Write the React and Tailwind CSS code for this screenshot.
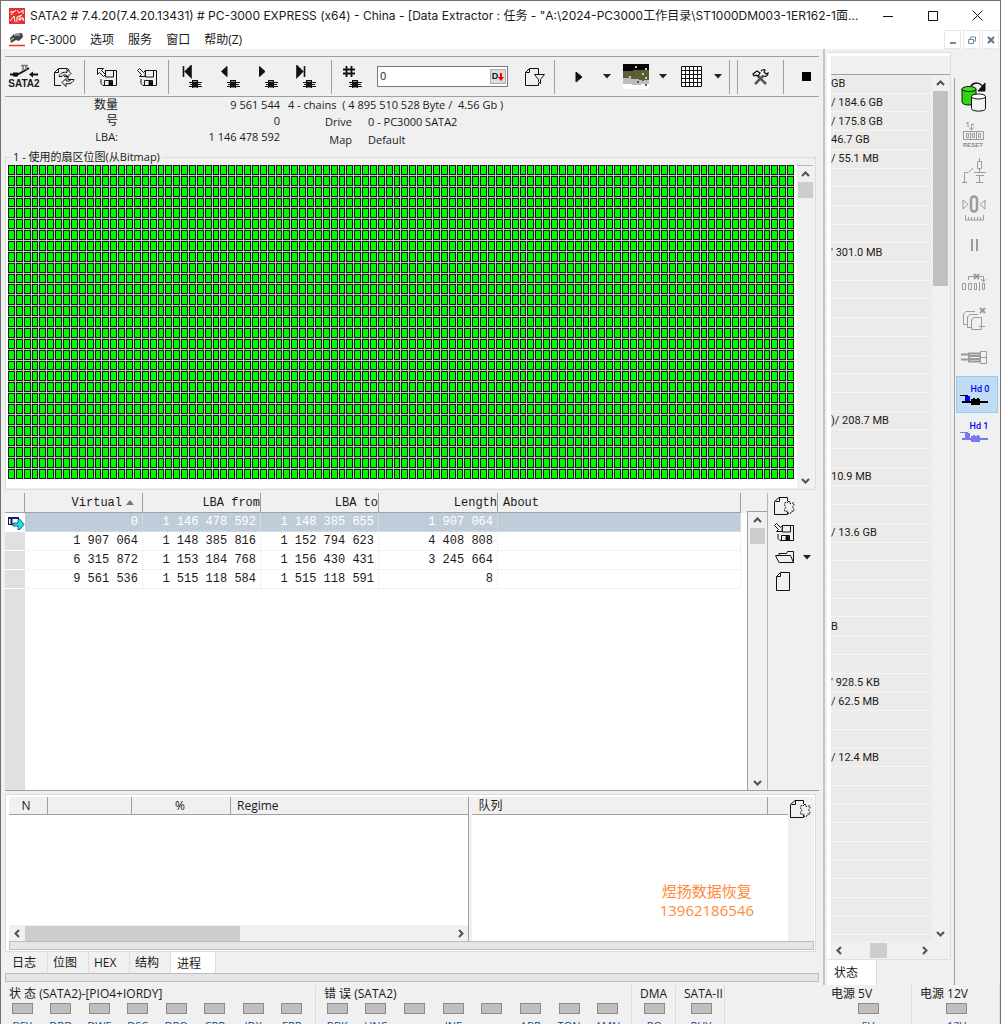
import React from "react";

const UI = "font-['Open_Sans','Noto_Sans_CJK_SC',sans-serif]";

function Svg({ w, h, children, className = "" }) {
  return (
    <svg width={w} height={h} viewBox={`0 0 ${w} ${h}`} fill="none" stroke="#111" className={`shrink-0 ${className}`} aria-hidden="true">
      {children}
    </svg>
  );
}

/* ---------- toolbar drawings ---------- */

function SataIcon() {
  return (
    <Svg w={28} h={14}>
      <path d="M0 10.500h6M22 10.500h6M5 12l9-5 5-3" strokeWidth="2" />
      <path d="M3 8.500h5v4H3zM19 10.500l4-3v6z" fill="#111" stroke="none" />
      <path d="M11 1.500h7M13 2v5M16 2v4" stroke="#777" strokeWidth="1.500" />
    </Svg>
  );
}

function RefreshDocIcon() {
  return (
    <Svg w={22} h={20}>
      <path d="M8 18.500H1.500v-13l4-4h9l2 2M5.500 1.500v4h-4" />
      <path d="M14 5.500c-4-1-7 1-8 4h3c1-2 3-2 5-1v2l4-4-4-4z" fill="#f0f0f0" />
      <path d="M13 16.500c4 1 7-1 8-4h-3c-1 2-3 2-5 1v-2l-4 4 4 4z" fill="#f0f0f0" />
      <path d="M11 9.500h4v3h4" />
    </Svg>
  );
}

function DiskIcon({ dir = "up" }) {
  return (
    <Svg w={22} h={20}>
      <path d="M9 3.500h11.500v15H7l-2-2V12" />
      <path d="M9.500 4v6h8V4M8.500 18.500v-5h8v5" />
      <path d="M13 14.500h2.500v4H13z" fill="#111" />
      {dir === "up" ? (
        <path d="M1.500 1.500h6l-2 2 4 4-2 2-4-4-2 2z" fill="#f0f0f0" />
      ) : (
        <path d="M9 9.500H3.500l2-2-4-4 2-2 4 4 2-2z" fill="#f0f0f0" />
      )}
    </Svg>
  );
}

function HeadGlyph() {
  return (
    <g>
      <path d="M7 16.500h13M8 18.500h11M7 20.500h13" />
      <path d="M10 14h6v8h-6z" fill="#111" stroke="none" />
      <path d="M11 15.500h4M11 21.500h4" stroke="#888" />
    </g>
  );
}

function NavIcon({ kind }) {
  return (
    <Svg w={22} h={24}>
      {kind === "first" && <path d="M1.500 1v11M9 1v11L3.500 6.500z" fill="#111" strokeWidth="1.600" />}
      {kind === "prev" && <path d="M7 1.500v10L1.500 6.500z" fill="#111" />}
      {kind === "next" && <path d="M1.500 1.500v10L7 6.500z" fill="#111" />}
      {kind === "last" && <path d="M8.500 1v11M1 1v11l5.500-5.500z" fill="#111" strokeWidth="1.600" />}
      {kind === "hash" && <path d="M4.500 1v11M9.500 1v11M1 4.500h12M1 8.500h12" strokeWidth="1.800" />}
      <g transform="translate(0 1)"><HeadGlyph /></g>
    </Svg>
  );
}

function DocFunnelIcon() {
  return (
    <Svg w={22} h={20}>
      <path d="M14.500 7V1.500h-9l-4 4V18.500h13V16M5.500 1.500v4h-4" />
      <path d="M10.500 7.500h10l-4 5v4l-2-1.500v-2.500z" fill="#f0f0f0" />
    </Svg>
  );
}

function DocGearIcon() {
  return (
    <Svg w={22} h={20}>
      <path d="M14.500 5V1.500H6l-4.500 4V18.500h13V16M6.500 1.500v4h-4" />
      <path d="M15 5.500h2v2h2l1.500-1 .5 2.500-1.500 2 1.500 2-.5 2.500-2-.5-1 2.500h-2l-1-2.500-2.500.5-.5-2.500 1.500-2-1.500-2 .5-2.500 2 .5z" fill="#f0f0f0" strokeDasharray="2 1" />
    </Svg>
  );
}

function TerrainIcon() {
  return (
    <Svg w={26} h={25}>
      <g stroke="none">
        <path d="M0 0h26v7H0z" fill="#050505" />
        <path d="M0 7h10V6h16v10H0z" fill="#5c5c38" />
        <path d="M0 14h8v1h8v1h10v5H0z" fill="#bdbdbd" />
        <path d="M0 20h9v1h9v-1h8v5H0z" fill="#fff" />
        <path d="M12 2h2v2h-2zM22 4h2v2h-2zM6 12h2v2H6zM19 9h2v2h-2zM22 13h2v2h-2z" fill="#c8c8a0" />
        <path d="M14 17h2v2h-2zM19 15h2v2h-2zM22 20h2v2h-2z" fill="#5c5c38" />
      </g>
    </Svg>
  );
}

function GridIcon() {
  return (
    <Svg w={21} h={21}>
      <path d="M.5 .5h20v20H.5zM4.500 0v21M8.500 0v21M12.500 0v21M16.500 0v21M0 4.500h21M0 8.500h21M0 12.500h21M0 16.500h21" fill="#fff" />
    </Svg>
  );
}

function ToolsIcon() {
  return (
    <Svg w={17} h={16}>
      <path d="M3 15L12 6M14 15L5 6" stroke="#555" strokeWidth="2.500" />
      <path d="M1 5l4-3 3 2-2 3-2-1-2 1zM9 2c2-2 4-1 4-1l-1 2 2 2 2-1c0 3-3 4-4 3" fill="#fff" strokeWidth="1.300" />
    </Svg>
  );
}

function Caret() {
  return (
    <Svg w={8} h={5}>
      <path d="M0 0h8L4 4.500z" fill="#222" stroke="none" />
    </Svg>
  );
}

function FolderIcon() {
  return (
    <Svg w={20} h={14}>
      <path d="M4 12.500L.5 5.500h15l3 7zM18.500 12.500V1.500h-6l-1 2H4v2M4 12.500h14" />
    </Svg>
  );
}

function BlankDocIcon() {
  return (
    <Svg w={14} h={19}>
      <path d="M4.500 .5h9v18H.500v-14zM4.500 .5v4H.500" />
    </Svg>
  );
}

/* ---------- side bar drawings ---------- */

function CylindersIcon() {
  return (
    <Svg w={26} h={30}>
      <path d="M1 7v13c0 4 14 4 14 0V7" fill="#2fd60b" />
      <ellipse cx="8" cy="7" rx="7" ry="2.500" fill="#3be817" />
      <path d="M10.500 14.500v12c0 3.500 14 3.500 14 0v-12" fill="#f4f4f4" />
      <ellipse cx="17.500" cy="14.500" rx="7" ry="2.500" fill="#fff" />
      <path d="M10 4c3-4 9-4 12 1" strokeWidth="1.500" />
      <path d="M24 1v8h-7z" fill="#111" />
    </Svg>
  );
}

function ResetIcon() {
  return (
    <Svg w={24} h={26}>
      <g stroke="#9b9b9b">
        <path d="M4 2.500l2-1.500V6M9.500 3v6M9.500 3.500H12M7 6.500l2.500 2.500L12 6.500" />
        <path d="M1.500 10.500h20v8h-20zM4.500 12.500h2v4h-2zM10.500 12.500h2v4h-2zM16.500 12.500h2v4h-2zM8.500 11v7M14.500 11v7" />
      </g>
      <text x="1" y="26" fill="#8c8c8c" stroke="none" fontSize="6" fontWeight="700" fontFamily="Liberation Sans">RESET</text>
    </Svg>
  );
}

function SwitchIcon() {
  return (
    <Svg w={24} h={26}>
      <g stroke="#9b9b9b">
        <path d="M17.500 0v3M15.500 3.500h4v7h-4zM17.500 11v3M12 14.500h12M14 17.500h8M17.500 18v6M14 24.500h7" />
        <path d="M2.500 25V14.500h4M7 14l4-4M0 24.500h5" />
      </g>
    </Svg>
  );
}

function CalibrateIcon() {
  return (
    <Svg w={24} h={26}>
      <g stroke="#9b9b9b">
        <path d="M1 5v9l5-4.500zM23 5v9l-5-4.500z" />
        <rect x="9" y="1.500" width="6" height="15" rx="3" strokeWidth="2.500" />
        <path d="M3.500 20v5h18v-5M6.500 22v3M9.500 22v3M12.500 22v3M15.500 22v3M18.500 22v3" />
      </g>
    </Svg>
  );
}

function PauseIcon() {
  return (
    <Svg w={24} h={12}>
      <path d="M10 0v12M15 0v12" stroke="#9b9b9b" strokeWidth="2" />
    </Svg>
  );
}

function SkipSectorsIcon() {
  return (
    <Svg w={24} h={20}>
      <g stroke="#9b9b9b">
        <path d="M6.500 8V4.500H21.500v5M19 7l2.500 3L24 7" />
        <path d="M12 2l5 5M17 2l-5 5" strokeWidth="2" />
        <path d="M.5 11.500h3v6h-3zM6.500 11.500h3v6h-3zM12.500 11.500h2v6h-2zM20.500 11.500h2v6h-2zM17.500 10v9" />
      </g>
    </Svg>
  );
}

function PagesIcon() {
  return (
    <Svg w={24} h={24}>
      <g stroke="#9b9b9b">
        <path d="M18 1l5 5M23 1l-5 5" strokeWidth="2" />
        <path d="M13 4.500H4L1.500 7v10.500H5M16 7.500H8L5.500 10v10.500H9M9.500 13l2-2.500h8v12h-10zM17 19.500h6" />
      </g>
    </Svg>
  );
}

function ConnectorIcon() {
  return (
    <Svg w={26} h={14}>
      <g stroke="#9b9b9b">
        <path d="M0 4.500h9M0 9.500h9" strokeWidth="2" />
        <path d="M8 3.500h11v8H8zM9 6h9M9 9h9" strokeWidth="1.800" />
        <path d="M19.500 7.500h6M19.500 1.500h6v12h-6z" />
      </g>
    </Svg>
  );
}

function HeadDriveIcon({ body, block }) {
  return (
    <Svg w={28} h={11}>
      <g stroke="none">
        <path d="M0 0h8v1H0z" fill={body} />
        <path d="M5 1h5v5H5z" fill={block} />
        <path d="M2 6h26v2H2zM11 4h2V3h2v1h2V3h2v1h1v6h-9z" fill={body} />
      </g>
    </Svg>
  );
}

/* ---------- scrollbars ---------- */

const CHEVRONS = { up: "M1 6l3.500-3.500L8 6", down: "M1 3l3.500 3.500L8 3", left: "M6 1L2.500 4.500 6 8", right: "M3 1l3.500 3.500L3 8" };

function ScrollArrow({ dir, className = "" }) {
  return (
    <button type="button" aria-label={`Scroll ${dir}`} className={`flex size-4 shrink-0 items-center justify-center ${className}`}>
      <Svg w={9} h={9}>
        <path d={CHEVRONS[dir]} stroke="#505050" strokeWidth="2" />
      </Svg>
    </button>
  );
}

function VScroll({ className = "", thumb }) {
  return (
    <div className={`flex w-4 shrink-0 flex-col items-center bg-[#f0f0f0] ${className}`}>
      <ScrollArrow dir="up" />
      <div className={`w-[15px] bg-[#cdcdcd] ${thumb}`} />
      <div className="flex-1" />
      <ScrollArrow dir="down" />
    </div>
  );
}

/* ---------- window frame ---------- */

function TitleBar() {
  return (
    <header className="flex h-[29px] shrink-0 items-center bg-white pl-2">
      <Svg w={16} h={16} className="bg-[#e5322d]">
        <path d="M1 4h4l2-2M2 7l3-4M8 2l2 3 4-3v4M1 13l4-5 1 6M8 14V9l5-2M11 13V8M9 11h6M13 9l2 4" stroke="#fff" />
      </Svg>
      <h1 className="min-w-0 flex-1 truncate pl-[5px] font-['Inter','Noto_Sans_CJK_SC',sans-serif] text-[12px]">
        {'SATA2 # 7.4.20(7.4.20.13431) # PC-3000 EXPRESS (x64) - China - [Data Extractor : 任务 - "A:\\2024-PC3000工作目录\\ST1000DM003-1ER162-1面划...'}
      </h1>
      <button type="button" aria-label="Minimize" className="flex h-full w-[45px] items-center justify-center">
        <Svg w={10} h={10}><path d="M0 5.500h10" /></Svg>
      </button>
      <button type="button" aria-label="Maximize" className="flex h-full w-[45px] items-center justify-center">
        <Svg w={10} h={10}><path d="M.5 .5h9v9h-9z" /></Svg>
      </button>
      <button type="button" aria-label="Close" className="flex h-full w-[45px] items-center justify-center">
        <Svg w={11} h={11}><path d="M.5 .5l10 10M10.500 .5l-10 10" /></Svg>
      </button>
    </header>
  );
}

function MenuBar() {
  return (
    <nav className="flex h-[19px] shrink-0 items-center bg-white pl-2 text-[12px]">
      <Svg w={16} h={15}>
        <path d="M1 6l4-4 8-1 1 4-4 4-3-1-5 3z" fill="#444" stroke="none" />
        <path d="M5 3h6M2 8l3-2" stroke="#ddd" />
        <path d="M0 13.500h16" stroke="#e5322d" strokeWidth="1.500" />
      </Svg>
      <div className="flex flex-1 gap-3.5 pt-px pl-[5px]">
        {["PC-3000", "选项", "服务", "窗口", "帮助(Z)"].map((m) => (
          <button type="button" key={m}>{m}</button>
        ))}
      </div>
      <div className="flex gap-0.5 self-stretch pr-px">
        <button type="button" aria-label="Minimize child" className="flex w-[17px] items-center justify-center border border-[#e8e8e8]">
          <Svg w={8} h={8}><path d="M1 7h6" stroke="#71879b" strokeWidth="2" /></Svg>
        </button>
        <button type="button" aria-label="Restore child" className="flex w-[17px] items-center justify-center border border-[#e8e8e8]">
          <Svg w={8} h={8}><path d="M2.500 3V1h5v4H6M.5 3.500h5v4h-5z" stroke="#71879b" /></Svg>
        </button>
        <button type="button" aria-label="Close child" className="flex w-[17px] items-center justify-center border border-[#e8e8e8]">
          <Svg w={8} h={8}><path d="M1 1l6 6M7 1L1 7" stroke="#5b738a" strokeWidth="2" /></Svg>
        </button>
      </div>
    </nav>
  );
}

function Tool({ label, className = "w-[38px]", children }) {
  return (
    <button type="button" aria-label={label} className={`flex h-full shrink-0 flex-col items-center justify-center ${className}`}>
      {children}
    </button>
  );
}

function Sep({ className = "" }) {
  return <div className={`h-[34px] w-px shrink-0 bg-[#a0a0a0] ${className}`} />;
}

function Toolbar() {
  return (
    <div className="mt-[7px] flex h-[41px] shrink-0 items-center border-y border-[#a0a0a0]">
      <Tool label="SATA2 port">
        <SataIcon />
        <span className="font-['Liberation_Sans',sans-serif] text-[10px] leading-[12px] font-bold">SATA2</span>
      </Tool>
      <Tool label="Refresh" className="w-[41px]"><RefreshDocIcon /></Tool>
      <Sep />
      <Tool label="Load from disk" className="w-[43px]"><DiskIcon dir="up" /></Tool>
      <Tool label="Save to disk"><DiskIcon dir="down" /></Tool>
      <Sep className="ml-0.5" />
      <div className="flex h-full shrink-0 px-[5px]">
        <Tool label="First"><NavIcon kind="first" /></Tool>
        <Tool label="Previous"><NavIcon kind="prev" /></Tool>
        <Tool label="Next"><NavIcon kind="next" /></Tool>
        <Tool label="Last"><NavIcon kind="last" /></Tool>
      </div>
      <Sep />
      <Tool label="Go to sector" className="w-[41px]"><NavIcon kind="hash" /></Tool>
      <div className="ml-1 flex h-[21px] w-[131px] shrink-0 items-center border border-[#7a7a7a] bg-white pr-px">
        <input aria-label="Sector" defaultValue="0" className="w-full min-w-0 flex-1 pl-0.5 text-[11px] outline-none" />
        <button type="button" aria-label="Decimal" className="flex h-[15px] w-4 shrink-0 items-center justify-center border border-[#b0b0b0] bg-[#dcdcdc] font-['Liberation_Sans',sans-serif] text-[9px] font-bold">
          D
          <Svg w={6} h={8}><path d="M2 0h2v4h2L3 8 0 4h2z" fill="#f00" stroke="none" /></Svg>
        </button>
      </div>
      <Tool label="Filter" className="ml-2 w-[38px]"><DocFunnelIcon /></Tool>
      <Sep />
      <Tool label="Run" className="w-[48px]">
        <Svg w={8} h={12}><path d="M1 1v10l6-5z" fill="#111" /></Svg>
      </Tool>
      <Tool label="Run options" className="w-2"><Caret /></Tool>
      <Tool label="View" className="ml-1 w-[42px]"><TerrainIcon /></Tool>
      <Tool label="View options" className="w-3"><Caret /></Tool>
      <Tool label="Map grid" className="w-[45px]"><GridIcon /></Tool>
      <Tool label="Grid options" className="w-2"><Caret /></Tool>
      <Sep className="ml-[7px]" />
      <Sep className="ml-[7px]" />
      <Tool label="Tools" className="w-[45px]"><ToolsIcon /></Tool>
      <Sep />
      <Tool label="Stop" className="w-[35px] pl-2.5"><div className="size-[9px] bg-black" /></Tool>
    </div>
  );
}

function InfoBlock() {
  return (
    <section className="flex h-[52px] shrink-0 text-[11px]">
      <dl className="grid grid-cols-[113px_162px] content-start text-right leading-4">
        <dt className="text-[12px]">数量</dt><dd>9 561 544</dd>
        <dt className="text-[12px]">号</dt><dd>0</dd>
        <dt>LBA:</dt><dd>1 146 478 592</dd>
      </dl>
      <div className="pl-2">
        <p className="leading-4 whitespace-pre">{"4 - chains  ( 4 895 510 528 Byte /  4.56 Gb )"}</p>
        <dl className="grid grid-cols-[64px_1fr] gap-x-4 leading-[18px]">
          <dt className="text-right">Drive</dt><dd>0 - PC3000 SATA2</dd>
          <dt className="text-right">Map</dt><dd>Default</dd>
        </dl>
      </div>
    </section>
  );
}

const CELLS = Array.from({ length: 2900 }, (_, i) => i);

function SectorMap() {
  return (
    <fieldset className="mr-[3px] h-[341px] shrink-0 border border-[#dcdcdc]">
      <legend className="ml-[5px] px-0.5 text-[11px] leading-4">1 - 使用的扇区位图(从Bitmap)</legend>
      <div className="flex h-[323px]">
        <div className="min-w-0 flex-1 bg-white pl-0.5">
          <div className="mr-[3px] grid h-[314px] grid-cols-[repeat(100,minmax(0,1fr))] grid-rows-[repeat(29,minmax(0,1fr))] gap-px bg-[#c4c4c4]">
            {CELLS.map((i) => <i key={i} className="border border-[#101c10] bg-[#00fb00]" />)}
          </div>
        </div>
        <VScroll thumb="h-4" className="mr-0.5 border-t border-[#b8b8b8]" />
      </div>
    </fieldset>
  );
}

const CHAINS = [
  ["0", "1 146 478 592", "1 148 385 655", "1 907 064"],
  ["1 907 064", "1 148 385 816", "1 152 794 623", "4 408 808"],
  ["6 315 872", "1 153 184 768", "1 156 430 431", "3 245 664"],
  ["9 561 536", "1 515 118 584", "1 515 118 591", "8"],
];

function ChainTable() {
  return (
    <section className="mt-[3px] flex min-h-0 flex-1 border-b border-[#a0a0a0]">
      <div className="flex min-w-0 flex-1 flex-col bg-white">
        <table className="w-full table-fixed border-separate border-spacing-0 font-['Liberation_Mono','Courier_New',monospace] text-[12px] leading-[14px]">
          <colgroup>
            <col className="w-5" /><col className="w-[118px]" /><col className="w-[118px]" /><col className="w-[118px]" /><col className="w-[119px]" /><col /><col className="w-1.5" />
          </colgroup>
          <thead>
            <tr className="h-5 bg-[#f0f0f0] text-right [&>th]:border-r [&>th]:border-b [&>th]:border-[#a0a0a0] [&>th]:p-0 [&>th]:font-normal">
              <th aria-label="Marker" />
              <th><span className="flex items-center justify-end gap-1 pr-2">Virtual<Svg w={8} h={5}><path d="M0 5h8L4 0z" fill="#777" stroke="none" /></Svg></span></th>
              <th>LBA from</th>
              <th>LBA to</th>
              <th>Length</th>
              <th className="text-left"><span className="pl-[5px]">About</span></th>
              <th className="border-r-0! border-b-0!" aria-label="Spacer" />
            </tr>
          </thead>
          <tbody>
            {CHAINS.map((row, r) => (
              <tr key={row[0]} className="h-[19px]">
                <td className={r === 0 ? "p-0" : "border-b border-white bg-[#e0e0e0] p-0"}>
                  {r === 0 && (
                    <Svg w={20} h={15}>
                      <path d="M3.500 2.500h10v7h-10z" fill="#fff" stroke="#111" />
                      <path d="M3 3h11M6.500 3v6" stroke="#15157a" strokeWidth="2" />
                      <path d="M8 8h5V4.500h2l4 5-4 5h-2V11H8z" fill="#1de0ea" stroke="#045" strokeWidth=".8" />
                    </Svg>
                  )}
                </td>
                {row.map((v, c) => (
                  <td key={c} className={`border-r border-b border-dotted border-[#e6e6e6] p-0 pr-1 text-right ${r === 0 ? "bg-[#bfccda] text-white" : ""}`}>{v}</td>
                ))}
                <td className={`border-r border-b border-dotted border-[#e6e6e6] p-0 ${r === 0 ? "bg-[#bfccda]" : ""}`} />
                <td className="p-0" />
              </tr>
            ))}
          </tbody>
        </table>
        <div className="w-5 flex-1 bg-[#e0e0e0]" />
      </div>
      <div className="flex w-[21px] shrink-0 flex-col border-r border-[#b4b4b4]">
        <div className="h-[18px]" />
        <VScroll thumb="h-4" className="w-5! flex-1 border-t border-l border-[#a0a0a0]" />
      </div>
      <div className="flex w-[51px] shrink-0 flex-col gap-1.5 pt-[3px] pl-[5px]">
        <button type="button" aria-label="Chain settings" className="flex"><DocGearIcon /></button>
        <button type="button" aria-label="Save chains" className="flex"><DiskIcon dir="down" /></button>
        <button type="button" aria-label="Open chains" className="flex items-center gap-2 py-[2px] pl-0.5"><FolderIcon /><Caret /></button>
        <button type="button" aria-label="New chains" className="flex pl-[3px]"><BlankDocIcon /></button>
      </div>
    </section>
  );
}

const HEAD = "flex h-[18px] shrink-0 items-center border-b border-[#a0a0a0] bg-[#f0f0f0] text-[12px]";

function ProcessPanel() {
  return (
    <section className="mt-[3px] mr-[3px] flex h-[158px] shrink-0 flex-col border border-[#dcdcdc] bg-white pt-0.5 pr-px pl-[3px]">
      <div className="flex min-h-0 flex-1">
        <div className="flex min-w-0 flex-[460] flex-col border-r border-[#a0a0a0]">
          <div className={HEAD}>
            <span className="h-full w-[39px] border-r border-[#a0a0a0] pr-1 text-center">N</span>
            <span className="h-full w-[84px] border-r border-[#a0a0a0]" />
            <span className="h-full w-[99px] border-r border-[#a0a0a0] pr-0.5 text-center">%</span>
            <span className="pl-1.5">Regime</span>
          </div>
          <div className="flex-1" />
          <div className="flex h-4 items-center bg-[#f0f0f0]">
            <ScrollArrow dir="left" />
            <div className="h-[15px] w-[215px] bg-[#cdcdcd]" />
            <div className="flex-1" />
            <ScrollArrow dir="right" />
          </div>
        </div>
        <div className="w-[3px] bg-[#f0f0f0]" />
        <div className="relative flex min-w-0 flex-[316] flex-col">
          <div className={HEAD}><span className="flex-1 pl-1.5">队列</span><span className="h-full w-[21px] border-l border-[#a0a0a0]" /></div>
          <p className="absolute right-[34px] bottom-[21px] text-center text-[15px] leading-[19px] text-[#ff8a3c]">煜扬数据恢复<br />13962186546</p>
        </div>
        <div className="w-[26px] bg-[#f0f0f0] pt-0.5 pl-px">
          <button type="button" aria-label="Queue settings" className="flex"><DocGearIcon /></button>
        </div>
      </div>
      <div className="mb-px h-[9px] shrink-0 border border-[#bcbcbc] bg-[#e5e5e5]" />
    </section>
  );
}

function BottomTabs() {
  const tabs = ["日志", "位图", "HEX", "结构", "进程"];
  return (
    <div role="tablist" className="ml-0.5 flex h-[21px] shrink-0 text-[12px] leading-[18px]">
      {tabs.map((t) => (
        <button
          type="button"
          role="tab"
          key={t}
          aria-selected={t === "进程"}
          className={`border-r border-[#dcdcdc] text-left ${t === "进程" ? "w-[45px] bg-white pt-[3px] pl-1.5" : "w-[41px] pl-[5px]"}`}
        >
          {t}
        </button>
      ))}
    </div>
  );
}

/* ---------- right hand list ---------- */

const SIZES = {
  0: "GB", 1: "/ 184.6 GB", 2: "/ 175.8 GB", 3: "46.7 GB", 4: "/ 55.1 MB", 9: "' 301.0 MB", 18: ")/ 208.7 MB",
  21: "10.9 MB", 24: "/ 13.6 GB", 29: "B", 32: "' 928.5 KB", 33: "/ 62.5 MB", 36: "/ 12.4 MB",
};
const LIST_ROWS = Array.from({ length: 46 }, (_, i) => i);

function SizeList() {
  return (
    <div className="flex w-[131px] shrink-0 flex-col border-l-2 border-[#c4c4c4] pt-[3px] pl-0.5">
      <div className="mr-[3px] flex min-h-0 flex-1 flex-col border border-[#dedede] border-l-white pt-[3px] pl-[3px] shadow-[inset_3px_3px_0_#fff]">
        <div className="h-[19px] shrink-0 border-b border-[#a0a0a0] bg-[#f0f0f0]" />
        <div className="flex min-h-0 flex-1">
          <ul className="flex min-w-0 flex-1 flex-col bg-[#ecebe9] font-['Roboto',sans-serif] text-[11px]">
            {LIST_ROWS.map((i) => (
              <li key={i} className="flex min-h-0 flex-1 items-center overflow-hidden border-b border-dotted border-white leading-none whitespace-pre">{SIZES[i]}</li>
            ))}
            <li className="min-h-0 flex-[0.3]" />
          </ul>
          <VScroll thumb="h-[195px] bg-[#c0c0c0]!" className="mr-[2px]" />
        </div>
        <div className="mr-[18px] flex h-[18px] shrink-0 items-center bg-[#f0f0f0]">
          <ScrollArrow dir="left" />
          <div className="ml-[23px] h-[15px] w-[17px] bg-[#cdcdcd]" />
          <div className="flex-1" />
          <ScrollArrow dir="right" />
        </div>
      </div>
      <div role="tablist" className="flex h-[25px] shrink-0 text-[12px]">
        <button type="button" role="tab" aria-selected="true" className="w-[50px] border-r border-[#dcdcdc] bg-white pl-[7px] text-left">状态</button>
      </div>
    </div>
  );
}

function SideTool({ label, className = "", children }) {
  return (
    <button type="button" aria-label={label} className={`flex h-[37px] w-[42px] shrink-0 flex-col items-center justify-center pr-1.5 ${className}`}>
      {children}
    </button>
  );
}

function SideBar() {
  return (
    <aside className="mt-[29px] flex w-[46px] shrink-0 flex-col border-l border-[#a0a0a0] pl-px">
      <SideTool label="Drives"><CylindersIcon /></SideTool>
      <SideTool label="Reset"><ResetIcon /></SideTool>
      <SideTool label="Power switch"><SwitchIcon /></SideTool>
      <SideTool label="Recalibrate"><CalibrateIcon /></SideTool>
      <SideTool label="Pause"><PauseIcon /></SideTool>
      <SideTool label="Skip sectors"><SkipSectorsIcon /></SideTool>
      <SideTool label="Clear pages"><PagesIcon /></SideTool>
      <SideTool label="Connector" className="h-[39px]!"><ConnectorIcon /></SideTool>
      <SideTool label="Head 0" className="border border-[#99ccf2] bg-[#bfdcf3]">
        <span className="pl-3 font-['Roboto',sans-serif] text-[9px] leading-[12px] font-medium text-[#00f]">Hd 0</span>
        <HeadDriveIcon body="#000" block="#00f" />
      </SideTool>
      <SideTool label="Head 1">
        <span className="pl-2.5 font-['Roboto',sans-serif] text-[9px] leading-[12px] font-medium text-[#00f]">Hd 1</span>
        <HeadDriveIcon body="#7878f4" block="#7878f4" />
      </SideTool>
    </aside>
  );
}

/* ---------- status strip ---------- */

function StatusGroup({ title, lamps, className }) {
  return (
    <section className={`shrink-0 border-r border-[#dcdcdc] pl-0.5 whitespace-nowrap ${className}`}>
      <h2 className="pl-1.5 text-[12px] leading-[18px]">{title}</h2>
      <ul className="flex justify-around">
        {lamps.map((l, i) => (
          <li key={i} className="flex w-[38px] shrink-0 flex-col items-center">
            <span className="h-[11px] w-[21px] border border-[#8a8a8a] bg-[#bfbfbf]" />
            <span className="pt-1 text-[11px] leading-[16px] text-[#0d4b94]">{l}</span>
          </li>
        ))}
      </ul>
    </section>
  );
}

function StatusStrip() {
  return (
    <footer className="flex h-[39px] shrink-0 overflow-hidden">
      <StatusGroup title="状 态 (SATA2)-[PIO4+IORDY]" lamps={["BSY", "DRD", "DWF", "DSC", "DRQ", "CRR", "IDX", "ERR"]} className="w-[315px] pr-1" />
      <StatusGroup title="错 误 (SATA2)" lamps={["BBK", "UNC", "", "INF", "", "ABR", "TON", "AMN"]} className="w-[316px] pr-1" />
      <StatusGroup title="DMA" lamps={["RQ"]} className="w-[44px]" />
      <StatusGroup title="SATA-II" lamps={["PHY"]} className="w-[49px]" />
      <div className="flex-1" />
      <StatusGroup title="电源 5V" lamps={["5V"]} className="w-[89px]" />
      <StatusGroup title="电源 12V" lamps={["12V"]} className="w-[88px]" />
    </footer>
  );
}

export default function App() {
  return (
    <div className={`flex h-screen flex-col overflow-hidden border-x border-t border-[#707070] bg-[#f0f0f0] text-[#1a1a1a] ${UI}`}>
      <TitleBar />
      <MenuBar />
      <main className="flex min-h-0 flex-1">
        <div className="mr-1 ml-1 flex min-w-0 flex-1 flex-col">
          <Toolbar />
          <InfoBlock />
          <SectorMap />
          <ChainTable />
          <ProcessPanel />
          <BottomTabs />
          <div className="mb-[3px] h-[9px] shrink-0 border border-[#bcbcbc] bg-[#e5e5e5]" />
        </div>
        <SizeList />
        <SideBar />
      </main>
      <StatusStrip />
    </div>
  );
}
